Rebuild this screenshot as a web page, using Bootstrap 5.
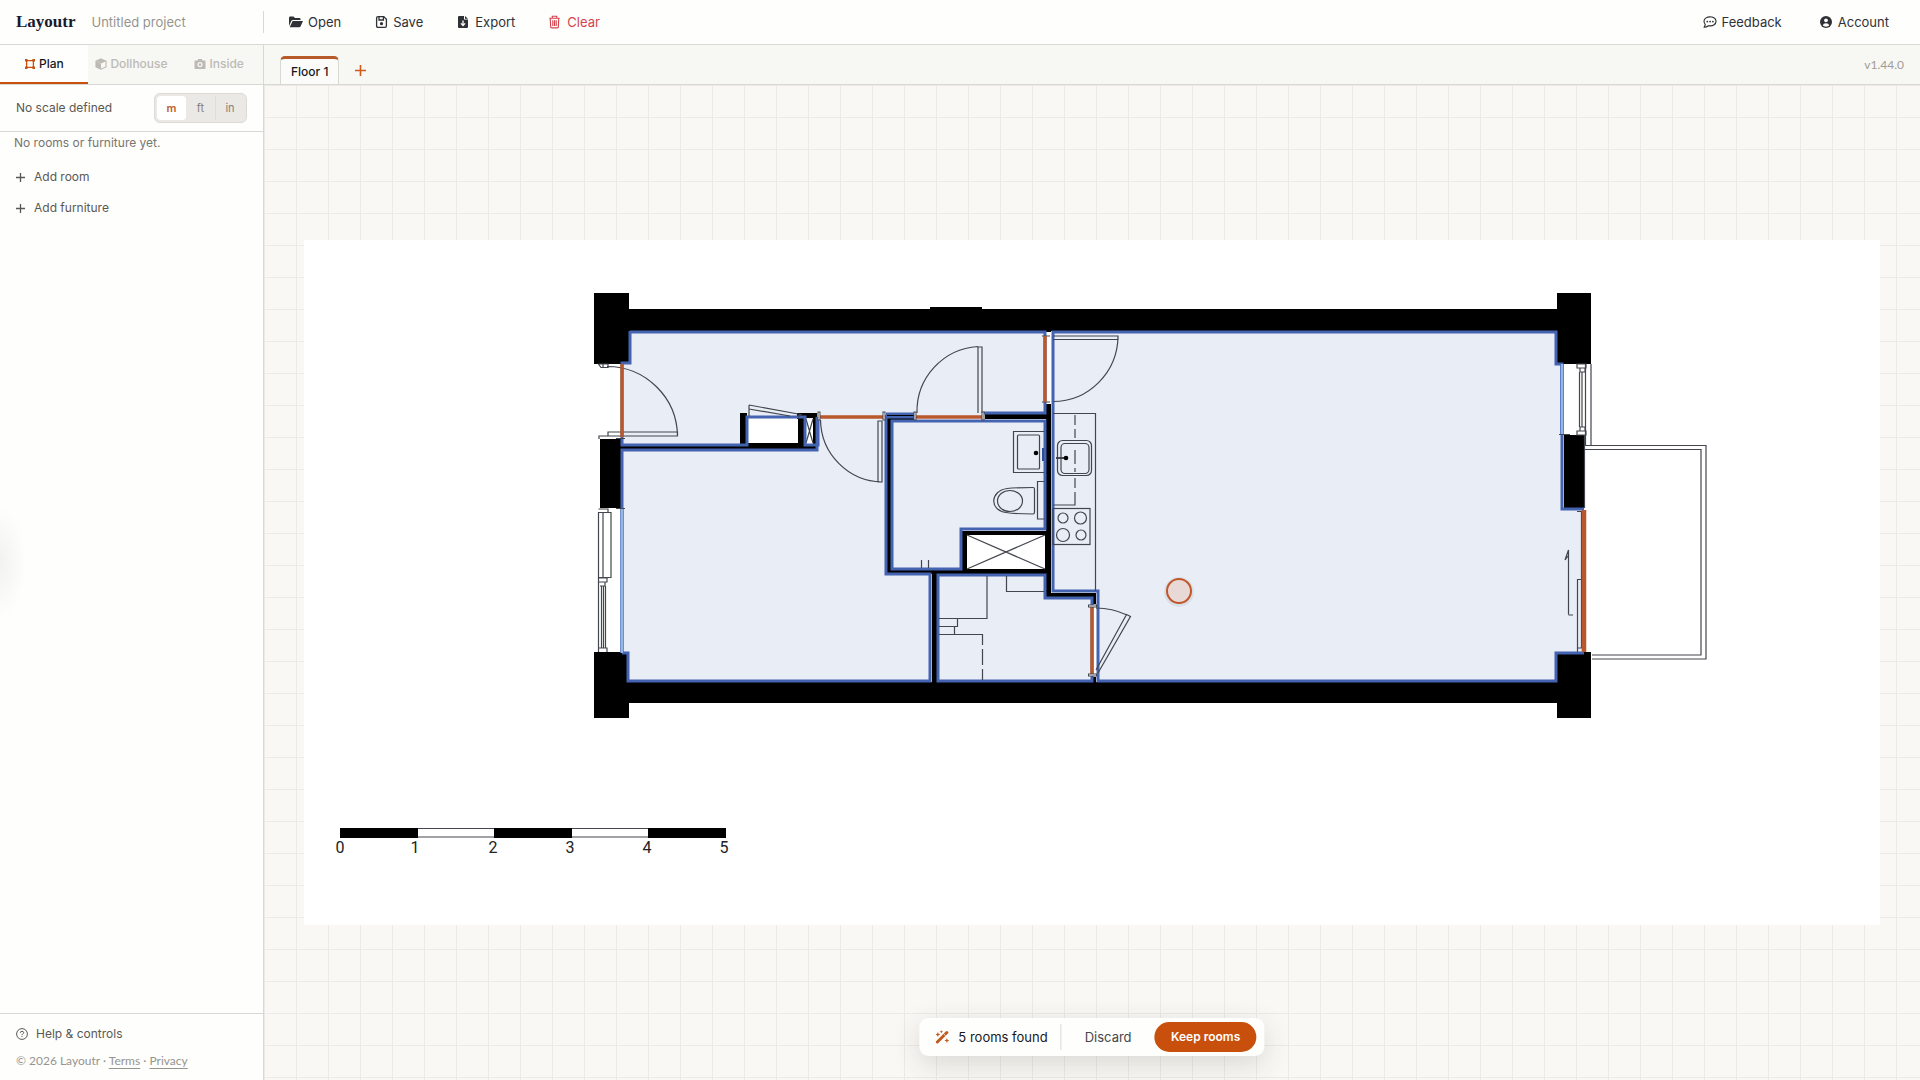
<!DOCTYPE html>
<html lang="en">
<head>
<meta charset="utf-8">
<meta name="viewport" content="width=device-width, initial-scale=1">
<title>Layoutr</title>
<link href="https://cdn.jsdelivr.net/npm/bootstrap@5.3.0/dist/css/bootstrap.min.css" rel="stylesheet">
<style>
:root{--accent:#c8500c;--line:#d9d9d4;--paper:#fefefc;--ink:#22242c;--soft:#5a5853}
body{font-family:Inter,"Liberation Sans",sans-serif;font-size:13px;line-height:20px;color:var(--ink);background:var(--paper)}
button,input{font-family:inherit;color:inherit}
.plain{border:0;background:none;padding:0}
svg.ico{flex:none;display:block;width:14px;height:14px;fill:none;stroke:currentColor;stroke-width:1.3}
svg.ico.thin{stroke-width:1.1}
svg.ico .f{fill:currentColor;stroke:none}
.topbar{height:45px;border-bottom:1px solid var(--line)}
.brandbox{width:264px;height:22px;border-right:1px solid var(--line);padding-left:16px;gap:16px}
.logo{font:bold 17px/22px "Liberation Serif",serif;color:#171a2b;text-decoration:none}
.project{width:140px;border:0;background:none;padding:0;font-size:13px;color:#96948f}
.project::placeholder{color:#96948f;opacity:1}
.tools{padding-left:25px;gap:33px}
.tools button,.acct button{gap:5px;color:#2f3136}
.tools button.danger{color:#d4434e}
.acct{gap:37px;padding-right:31px}
.side{width:264px;border-right:1px solid var(--line);background:radial-gradient(ellipse 26px 56px at 0 50%,#f2f2ef,transparent)}
.modes{height:40px;border-bottom:1px solid var(--line);background:#f7f7f4}
.modes button{flex:1 1 0;gap:3px;font-size:12px;font-weight:500;color:#bdbab4;border-bottom:2px solid transparent}
.modes button.on{background:var(--paper);color:#17181d;border-color:var(--accent)}
.modes svg.ico{width:12px;height:12px}
.modes button.on svg{color:var(--accent)}
.scale{height:47px;border-bottom:1px solid var(--line);padding:0 16px;font-size:12px;color:var(--soft)}
.units{height:30px;border:1px solid #dcdad6;border-radius:6px;background:#ebe9e6;padding:2px}
.units button{width:29px;font-size:11px;color:#85827c;border-radius:4px}
.units button.on{background:#fff;color:#b9622c;font-weight:600}
.units button:last-child{border-left:1px solid #dfddd9;border-radius:0}
.empty{padding:1px 14px 0;font-size:12px;color:#77756f}
.adds{padding:14px 16px;gap:11px;font-size:12px;font-weight:500;color:var(--soft)}
.adds button{gap:9px;text-align:left}
.adds svg.ico{width:9px;height:9px}
.foot{height:67px;border-top:1px solid var(--line);padding:10px 16px;gap:7px;color:var(--soft);font-size:12px}
.foot button{gap:8px}
.foot svg.ico{width:12px;height:12px;stroke-width:1}
.legal{font-family:Lato,sans-serif;font-size:12px;color:#96948f}
.legal a{color:inherit;text-underline-offset:3px}
.floors{height:40px;border-bottom:1px solid var(--line);background:#f7f7f4;padding:0 16px}
.floor{height:28px;border:1px solid var(--line);border-top:3px solid #b85a28;border-bottom:0;border-radius:5px 5px 0 0;background:#fbfbf9;padding:0 10px;font-size:12px;font-weight:500;color:#17181d}
.floors .addf{width:43px;height:28px;color:#cf5a1c}
.floors svg.ico{width:11px;height:11px;stroke-width:1.6}
.ver{font-family:Lato,sans-serif;font-size:12px;color:#a09d97}
.stage{background:#f9f8f5;background-image:linear-gradient(#ebeae6 1px,transparent 1px),linear-gradient(90deg,#ebeae6 1px,transparent 1px);background-size:32px 32px;padding:0 40px}
.plan{width:100%;height:auto;display:block}
.plan .w{fill:#000}
.plan .r{fill:#e8edf6}
.plan .o{fill:none;stroke:#4463b0;stroke-width:3}
.plan .t{fill:none;stroke:#43464e;stroke-width:1.2}
.plan .d{stroke:#b9582c;stroke-width:3.4;fill:none}
.plan .wide{stroke-width:4.5}
.plan .g{stroke:#4f78c4;stroke-width:3.6}
.plan .gi{stroke:#a9c6ea;stroke-width:1.6}
.plan text{font:16px Roboto,sans-serif;fill:#222;text-anchor:middle}
.found{bottom:24px;height:38px;background:var(--paper);border-radius:9px;padding:4px 8px 4px 16px;box-shadow:0 8px 28px rgba(60,50,30,.16)}
.found .msg{gap:9px;padding-right:13px;border-right:1px solid var(--line);height:26px;color:#17181d}
.found .msg svg{color:#c25a20}
.found .drop{width:93px;color:#45464a}
.found .keep{height:30px;width:102px;border-radius:15px;background:var(--accent);color:#fff;font-size:12px;font-weight:600}
</style>
</head>
<body>
<div class="vh-100 d-flex flex-column overflow-hidden">
<header class="topbar d-flex align-items-center flex-shrink-0">
  <div class="brandbox d-flex align-items-center">
    <a class="logo" href="#">Layoutr</a>
    <input class="project" type="text" placeholder="Untitled project" aria-label="Project name">
  </div>
  <nav class="tools d-flex" aria-label="File">
    <button class="plain d-flex align-items-center" type="button"><svg class="ico" viewBox="0 0 14 14"><path class="f" d="M0 11V2.800Q0 1.500 1.300 1.500H4.500L6 3H10.500Q11.500 3 11.500 4V5H4Q2.800 5 2.300 6Z"/><path class="f" d="M3.600 6H14L11.500 11.500Q11.200 12.200 10.400 12.200H.7Z"/></svg>Open</button>
    <button class="plain d-flex align-items-center" type="button"><svg class="ico" viewBox="0 0 14 14"><path d="M2.600 3Q2.600 1.600 4 1.600H9.800L12.400 4.200V11Q12.400 12.400 11 12.400H4Q2.600 12.400 2.600 11ZM5 1.800V5H9.400V1.800"/><circle class="f" cx="7.500" cy="8.700" r="1.600"/></svg>Save</button>
    <button class="plain d-flex align-items-center" type="button"><svg class="ico" viewBox="0 0 14 14"><path class="f" d="M2 2Q2 1 3 1H8V4.500H12V12Q12 13 11 13H3Q2 13 2 12ZM9 1L12 3.700H9Z"/><path stroke="#fff" d="M7 5.500V10.300M4.900 8.400L7 10.500L9.100 8.400"/></svg>Export</button>
    <button class="plain danger d-flex align-items-center" type="button"><svg class="ico thin" viewBox="0 0 14 14"><path d="M1.300 3.200H11.700M4.300 3V1.300H8.700V3M2.200 3.400L2.700 12Q2.700 12.900 3.700 12.900H9.300Q10.300 12.900 10.300 12L10.800 3.400M4.800 5.300V10.900M6.500 5.300V10.900M8.200 5.300V10.900"/></svg>Clear</button>
  </nav>
  <div class="acct d-flex ms-auto">
    <button class="plain d-flex align-items-center" type="button"><svg class="ico thin" viewBox="0 0 14 14"><path d="M1.200 12.300L2.300 9.500C.4 7.200.6 4.300 3 2.900C6.400.8 12 2 12.900 5.300C13.700 9 9.900 11.600 5.500 10.700Q3.500 12.300 1.200 12.300Z"/><circle class="f" cx="4.300" cy="6.600" r=".9"/><circle class="f" cx="7.100" cy="6.600" r=".9"/><circle class="f" cx="9.900" cy="6.600" r=".9"/></svg>Feedback</button>
    <button class="plain d-flex align-items-center" type="button"><svg class="ico" viewBox="0 0 14 14"><circle class="f" cx="7" cy="7" r="6"/><circle cx="7" cy="5.300" r="1.900" fill="#fff" stroke="none"/><path fill="#fff" stroke="none" d="M3.700 10.600Q4.300 8.200 7 8.200T10.300 10.600Q9 11.700 7 11.700T3.700 10.600Z"/></svg>Account</button>
  </div>
</header>
<div class="d-flex flex-grow-1 overflow-hidden">
<aside class="side d-flex flex-column flex-shrink-0">
  <div class="modes d-flex">
    <button class="plain on d-flex align-items-center justify-content-center" type="button"><svg class="ico" viewBox="0 0 12 12"><path d="M2.600 3V9M9.400 3V9M3 2.600H9M3 9.400H9"/><path class="f" d="M1 1h2.600v2.600H1zM8.400 1h2.600v2.600H8.400zM1 8.400h2.600v2.600H1zM8.400 8.400h2.600v2.600H8.400z"/></svg>Plan</button>
    <button class="plain d-flex align-items-center justify-content-center" type="button" disabled><svg class="ico thin" viewBox="0 0 12 12"><path d="M6 .9L11 3V9L6 11.200L1 9V3Z"/><path class="f" d="M6 5.500L1 3.300L6 1L11 3.300ZM1 3V9L6 11.200V5.200Z"/></svg>Dollhouse</button>
    <button class="plain d-flex align-items-center justify-content-center" type="button" disabled><svg class="ico" viewBox="0 0 12 12"><path class="f" fill-rule="evenodd" d="M1.500 2.500H3.500L4.300 1H7.700L8.500 2.500H10.500Q11.500 2.500 11.500 3.500V10Q11.500 11 10.500 11H1.500Q.5 11 .5 10V3.500Q.5 2.500 1.500 2.500ZM6 4A2.600 2.600 0 1 0 6 9.200A2.600 2.600 0 1 0 6 4Z"/><circle class="f" cx="6" cy="6.600" r="1.300"/></svg>Inside</button>
  </div>
  <div class="scale d-flex align-items-center justify-content-between">
    <span>No scale defined</span>
    <div class="units d-flex" role="group" aria-label="Units"><button class="plain on" type="button">m</button><button class="plain" type="button">ft</button><button class="plain" type="button">in</button></div>
  </div>
  <div class="empty">No rooms or furniture yet.</div>
  <div class="adds d-flex flex-column align-items-start">
    <button class="plain d-flex align-items-center" type="button"><svg class="ico" viewBox="0 0 9 9"><path d="M4.500 0V9M0 4.500H9"/></svg>Add room</button>
    <button class="plain d-flex align-items-center" type="button"><svg class="ico" viewBox="0 0 9 9"><path d="M4.500 0V9M0 4.500H9"/></svg>Add furniture</button>
  </div>
  <footer class="foot d-flex flex-column align-items-start mt-auto">
    <button class="plain d-flex align-items-center" type="button"><svg class="ico" viewBox="0 0 12 12"><circle cx="6" cy="6" r="5.400"/><path d="M4.300 4.800Q4.400 3.300 6 3.300T7.700 4.700Q7.600 5.500 6.700 5.900Q6 6.300 6 7.200M6 8V9"/></svg>Help &amp; controls</button>
    <div class="legal">© 2026 Layoutr · <a href="#">Terms</a> · <a href="#">Privacy</a></div>
  </footer>
</aside>
<main class="d-flex flex-column flex-grow-1 position-relative overflow-hidden">
  <div class="floors d-flex align-items-end flex-shrink-0">
    <button class="floor" type="button">Floor 1</button>
    <button class="plain addf d-flex align-items-center justify-content-center" type="button" aria-label="Add floor"><svg class="ico" viewBox="0 0 11 11"><path d="M5.500 0V11M0 5.500H11"/></svg></button>
    <span class="ver ms-auto align-self-center">v1.44.0</span>
  </div>
  <div class="stage flex-grow-1 d-flex align-items-center">
  <svg class="plan" viewBox="304 240 1576 685" role="img" aria-label="Floor plan with five detected rooms">
    <rect x="304" y="240" width="1576" height="685" fill="#fff"/>
    <!-- rooms: fills -->
    <g class="r">
      <path d="M630 332H1045V413H984V417H818V445H805V417H747V445H622V363H630Z"/>
      <path d="M622 450H817V417H886V574H930V681H628V653H622Z"/>
      <path d="M892 421H1045V529H961V569H892Z"/>
      <path d="M938 575H1045V598H1092V681H938Z"/>
      <path d="M1053 332H1556V364H1562V509H1584V653H1556V681H1098V591H1053Z"/>
    </g>
    <!-- load-bearing walls -->
    <path class="w" d="M594 293H629V309H930V307H982V309H1557V293H1591V364H1557V331H629V364H594ZM594 652H629V682H1557V652H1591V718H1557V703H629V718H594ZM600 439H622V508H600ZM1564 435H1585V508H1564Z"/>
    <!-- partitions -->
    <path class="w" d="M740 413H747V443H797V418H804V443H818V449H740ZM797 413H817V418H797ZM622 446H818V449H622ZM813 418H817V445H813ZM887 413H914V420H887ZM887 414H891V574H887ZM985 414H1046V419H985ZM1046 404H1051V593H1096V604H1093V597H1046ZM1046 330H1051V332H1046ZM888 570H1048V574H888ZM932 572H937V684H932ZM962 531H1048V572H962ZM1093 677H1096V683H1093Z"/>
    <path fill="#fff" d="M967 535H1045V569H967ZM749 419H798V443H749ZM806 419H813V444H806Z"/>
    <path class="t" d="M967 535L1045 569M967 569L1045 535M806 443L813 419M806 419L813 443"/>
    <!-- room outlines -->
    <g class="o">
      <path d="M630 332H1045V413H984M914 417H885M818 417V445H805V417H747V445H622V363H630V331"/>
      <path d="M622 509V450H817V417M886 415V574H930V681H628V653H622M914 414H886"/>
      <path d="M892 421H1045V529H961V569H892Z"/>
      <path d="M938 575H1045V598H1092V681H938Z"/>
      <path d="M1584 509H1562V364H1556V332H1053V591H1098V681H1556V653H1584"/>
    </g>
    <path d="M887 415H914V416H887Z"/>
    <!-- windows -->
    <path class="g" d="M622 509V653M1562 364V434"/><path class="gi" d="M622 509V653M1562 364V434"/>
    <g class="t">
      <path d="M598.500 364H608V367.500H601ZM603 364V367M607 366.500A70.500 70.500 0 0 1 677.500 436H608V432H677.500V436M608 436H599V439M616 438.500H625"/>
      <path d="M982 413V347H978V413M978 346.500A65 65 0 0 0 917 413"/>
      <path d="M878 421H882V482H878ZM882 482A63 63 0 0 1 820.500 420"/>
      <path d="M1053 336H1118V339.500H1053M1118 336A65 66 0 0 1 1053 401.500M1042 336H1050M1042 402H1050"/>
      <path d="M749 405L801 414.500L798 417M749 405V416M749 409L790 416"/>
      <path d="M598.500 509H608V512.500H598.500V652M599 512.500H611V577.500H599M603 512.500V577.500M599 578H607V582H599M600 582H605V586H600M601.500 586V648M603.500 586V648M605.500 586V648M599 648H607V652M616 508.500H625"/>
      <path d="M1577 364H1586V368H1577ZM1580 368H1585V372H1580ZM1579.500 372V427M1582 372V427M1585.500 364V445M1580 427H1585V431H1580ZM1577 431H1586V435H1577ZM1591 364V445M1559 434.500H1570"/>
      <path d="M1585 445.500H1706V659H1592M1585 449.500H1701V655H1592M1584.500 435V508"/>
      <path d="M1577 511.500H1583M1583 579.500H1577.500V652M1581.500 511V648H1577.500M1568.500 614.500V550L1565 560L1568 556M1568.500 615H1573"/>
      <path d="M1053 413.500H1095.500V591M1075 415V425M1075 429V438M1075 450V464M1075 468V472M1075 478V488M1075 492V505H1053"/>
      <rect x="1057.500" y="440.500" width="34" height="35" rx="5"/><rect x="1061" y="443.500" width="28" height="30" rx="4"/>
      <path d="M1056 458H1066" stroke-width="2"/>
      <rect x="1053" y="508.500" width="37" height="36"/>
      <circle cx="1063" cy="518" r="5"/><circle cx="1080.500" cy="518" r="6"/><circle cx="1063" cy="535" r="6.500"/><circle cx="1081" cy="535" r="5"/>
      <path d="M1044 431.500H1013.500V472.500H1044"/><rect x="1017.500" y="435" width="22" height="34" rx="1"/>
      <path d="M1044 481.500H1037.500V519H1044M1034.500 489Q1034.500 487.500 1033 487.500Q1016 487.500 1007 488.500C990 491 989 510 1006 512.500Q1016 514 1033 514Q1034.500 514 1034.500 512Z"/>
      <ellipse cx="1010" cy="501" rx="12.500" ry="10.500"/>
      <path d="M921.500 560V568M928.500 560V568M987 576V618.500H939M1006.500 576V591.500H1044M939 626.500H957.500V619M954.500 627V634.500M939 634.500H982.500V645M982.500 649V665M982.500 669V680"/>
      <path d="M1096 670L1126.500 614.500L1130.500 616.500L1098 673M1096 608Q1112 608 1127 615"/>
    </g>
    <circle cx="1066" cy="458" r="2.300"/><circle cx="1036" cy="453" r="2.300"/>
    <path d="M1043 448V461" stroke="#2d4c9b" stroke-width="2"/>
    <!-- doors -->
    <path class="d" d="M622 364V437M820 417H883M915 417H982M1045 336V402M1092 607V674"/><path class="d wide" d="M1584 510V652"/>
    <g fill="#fff" stroke="#43464e"><rect x="818" y="412" width="2" height="8"/><rect x="883" y="412" width="2" height="8"/><rect x="914" y="412" width="2" height="8"/><rect x="982" y="412" width="2" height="8"/><rect x="1088.500" y="605" width="8" height="2"/><rect x="1088.500" y="674" width="8" height="2"/></g>
    <!-- scale bar -->
    <path class="t" d="M340 828.500H726M340 837H726"/>
    <path class="w" d="M340 828H418V838H340ZM494 828H572V838H494ZM648 828H726V838H648Z"/>
    <text x="340" y="853">0</text><text x="415" y="853">1</text><text x="493" y="853">2</text><text x="570" y="853">3</text><text x="647" y="853">4</text><text x="724" y="853">5</text>
    <circle cx="1179" cy="592" r="15" opacity=".06"/>
    <circle cx="1179" cy="591" r="12" fill="#e8d9d6" stroke="#c0572a" stroke-width="2"/>
  </svg>
  </div>
  <div class="found d-flex align-items-center position-absolute start-50 translate-middle-x" role="status">
    <div class="msg d-flex align-items-center text-nowrap"><svg class="ico" viewBox="0 0 14 14"><path stroke-width="3" stroke-linecap="round" d="M2 12L11.500 2.500"/><path stroke="#fff" stroke-width=".8" d="M8.300 3.800L10.200 5.700"/><path class="f" d="M2.500 2L3.200 3.800L5 4.500L3.200 5.200L2.500 7L1.800 5.200L0 4.500L1.800 3.800ZM6 0L6.500 1.300L7.800 1.800L6.500 2.300L6 3.600L5.500 2.300L4.200 1.800L5.500 1.300ZM11.500 8L12.200 9.800L14 10.500L12.200 11.200L11.500 13L10.800 11.200L9 10.500L10.800 9.800Z"/></svg>5 rooms found</div>
    <button class="plain drop" type="button">Discard</button>
    <button class="plain keep" type="button">Keep rooms</button>
  </div>
</main>
</div>
</div>
<script src="https://cdn.jsdelivr.net/npm/bootstrap@5.3.0/dist/js/bootstrap.bundle.min.js"></script>
</body>
</html>
